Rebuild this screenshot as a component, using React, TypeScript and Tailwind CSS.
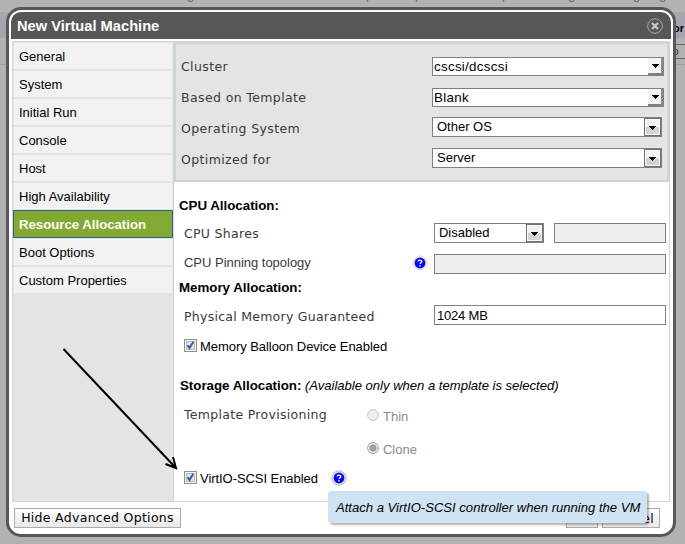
import type { ReactNode } from "react";

const tabs = [
  "General",
  "System",
  "Initial Run",
  "Console",
  "Host",
  "High Availability",
  "Resource Allocation",
  "Boot Options",
  "Custom Properties",
];

function Backdrop() {
  return (
    <div className="h-[544px] w-[685px] overflow-hidden text-[13px]">
      <div className="flex h-[13px] items-start overflow-hidden border-b border-[#a8a8a8]">
        <span className="-mt-[13px] ml-[187px] h-4 w-[7px] leading-4 text-[#666]">g</span>
        <span className="-mt-[13px] ml-[172px] h-4 w-[7px] leading-4 text-[#666]">p</span>
        <span className="-mt-[13px] ml-[42px] h-4 w-[7px] leading-4 text-[#666]">p</span>
        <span className="-mt-[13px] ml-[80px] h-4 w-[7px] leading-4 text-[#666]">p</span>
        <span className="-mt-[13px] ml-[59px] h-4 w-[7px] leading-4 text-[#666]">g</span>
        <span className="-mt-[13px] ml-[58px] h-4 w-[7px] leading-4 text-[#666]">g</span>
        <span className="-mt-[13px] ml-[19px] h-4 w-[7px] leading-4 text-[#666]">g</span>
      </div>
      <div className="flex h-[25px] items-center justify-end bg-[#a5a5b1] pt-[5px]">
        <span className="w-[12px] text-[11px] font-bold whitespace-nowrap">or</span>
      </div>
      <div className="flex h-[27px] justify-end border-b border-[#9f9f9f] pt-[6px]">
        <div className="flex h-[15px] w-[60px] items-center border-y border-[#666] pl-[48px] text-[10px] text-[#223]">
          o
        </div>
      </div>
    </div>
  );
}

function Label({ children, className = "tracking-[0.26px]" }: { children: ReactNode; className?: string }) {
  return (
    <span
      className={`font-['DejaVu_Sans',Verdana,sans-serif] text-[12.5px] whitespace-nowrap text-[#3a3a3a] ${className}`}
    >
      {children}
    </span>
  );
}

function Triangle() {
  return (
    <svg width="7" height="4" viewBox="0 0 7 4" shapeRendering="crispEdges">
      <path d="M0 0h7v1H6v1H5v1H4v1H3V3H2V2H1V1H0z" fill="#000" />
    </svg>
  );
}

function ComboBox({ value }: { value: string }) {
  return (
    <div className="flex h-[19px] w-[232px] items-stretch border border-[#808080] bg-white">
      <span className="flex-1 pl-px text-[13.33px] leading-[17px] tracking-[0.3px]">{value}</span>
      <span className="flex w-[15px] items-center justify-center border-r-2 border-b-2 border-[#808080] border-r-[#8c8c8c] bg-[#f3f3f3] pl-[2px]">
        <Triangle />
      </span>
    </div>
  );
}

function Select({ value, className }: { value: string; className: string }) {
  return (
    <div className={`flex h-[20px] items-stretch border border-[#808080] bg-white ${className}`}>
      <span className="flex-1 pl-[4px] text-[13px] leading-[18px]">{value}</span>
      <span className="flex w-[17px] items-center justify-center border border-[#707070] bg-linear-to-b from-[#f2f2f2] from-50% to-[#d4d4d4] to-50% pt-px shadow-[inset_0_0_0_1px_#fafafa]">
        <Triangle />
      </span>
    </div>
  );
}

function Checkbox() {
  return (
    <svg width="13" height="13" viewBox="0 0 13 13">
      <rect x=".5" y=".5" width="12" height="12" fill="#f4f4f4" stroke="#8e8f8f" />
      <rect x="2.5" y="2.5" width="8" height="8" fill="#dfe3e8" stroke="#b9bdc4" />
      <path d="M3.6 6.2 5.5 9 9.3 2.8" fill="none" stroke="#3f5494" strokeWidth="1.9" />
    </svg>
  );
}

function Radio({ checked = false }: { checked?: boolean }) {
  return (
    <svg width="12" height="12" viewBox="0 0 12 12">
      <circle cx="6" cy="6" r="5.4" fill="#f0f0f0" stroke={checked ? "#9c9c9c" : "#c4c4c4"} />
      {checked && <circle cx="6" cy="6" r="3.1" fill="#a8a8a8" stroke="#858585" />}
    </svg>
  );
}

function Help({ focused = false }: { focused?: boolean }) {
  return (
    <svg width="16" height="16" viewBox="0 0 16 16">
      <circle cx="8" cy="8" r="7.2" fill="#e6e6f2" stroke={focused ? "#b4b4b4" : "#e2e2e2"} />
      <circle cx="8" cy="8" r="5.4" fill="#0606ee" />
      <path
        d="M6.2 6.5C6.2 4.5 9.8 4.6 9.8 6.5 9.8 7.700 8 7.700 8 9.100M8 10.100v1.300"
        fill="none"
        stroke="#fff"
        strokeWidth="1.3"
      />
    </svg>
  );
}

function TopRow({ label, children }: { label: string; children: ReactNode }) {
  return (
    <div className="flex h-[31px] items-center">
      <Label className="w-[251px] pt-[2px] tracking-[0.38px]">{label}</Label>
      {children}
    </div>
  );
}

export default function App() {
  return (
    <div className="relative h-[544px] w-[685px] overflow-hidden bg-[#b2b2b2] font-['Liberation_Sans',Arial,sans-serif] text-black">
      <Backdrop />

      <div className="absolute top-[7px] left-[6px] flex h-[530px] w-[670px] flex-col rounded-[15px] border-[3px] border-[#575757] bg-white p-[2px]">
        <div className="flex h-[27px] shrink-0 items-center justify-between rounded-t-[10px] bg-[#575757] pr-[8px] pl-[6px]">
          <h1 className="text-[14.67px] font-bold whitespace-nowrap text-white">New Virtual Machine</h1>
          <svg width="16" height="16" viewBox="0 0 16 16">
            <circle cx="8" cy="8" r="7.3" fill="none" stroke="#a9a9a9" />
            <path d="m5 5 6 6M11 5l-6 6" stroke="#c6c6c6" strokeWidth="2.4" />
          </svg>
        </div>

        <div className="mt-[2px] ml-px flex h-[461px] w-[658px] shrink-0 border border-[#cdd8dd]">
          <nav className="flex w-[161px] shrink-0 flex-col border-r border-[#cdd8dd] bg-[#e4e4e4]">
            {tabs.map((tab) =>
              tab === "Resource Allocation" ? (
                <div
                  key={tab}
                  className="flex h-[28px] shrink-0 items-center border border-[#35608f] bg-[#83a935] pt-[2px] pl-[5px] text-[13.2px] font-bold text-[#fdfdf0]"
                >
                  {tab}
                </div>
              ) : (
                <div
                  key={tab}
                  className="flex h-[28px] shrink-0 items-center border border-[#e4e4e4] bg-[#f2f2f2] pt-[2px] pl-[5px] text-[13px]"
                >
                  {tab}
                </div>
              ),
            )}
          </nav>

          <main className="flex min-w-0 flex-1 flex-col">
            <section className="flex h-[140px] shrink-0 flex-col border-2 border-[#d0d3d4] bg-[#e4e4e4] pt-[7px] pl-[5px]">
              <TopRow label="Cluster">
                <ComboBox value="cscsi/dcscsi" />
              </TopRow>
              <TopRow label="Based on Template">
                <ComboBox value="Blank" />
              </TopRow>
              <TopRow label="Operating System">
                <Select value="Other OS" className="mb-[3px] w-[230px]" />
              </TopRow>
              <TopRow label="Optimized for">
                <Select value="Server" className="mb-[3px] w-[230px]" />
              </TopRow>
            </section>

            <section className="flex flex-col pl-[5px] text-[13px] tracking-[-0.02px]">
              <h2 className="mt-[15px] h-[18px] text-[13.33px] leading-[18px] font-bold">CPU Allocation:</h2>
              <div className="mt-[8px] flex h-[20px] items-center pl-[5px]">
                <Label className="w-[250px] pt-[3px] tracking-[0.3px]">CPU Shares</Label>
                <Select value="Disabled" className="w-[110px]" />
                <div className="ml-[10px] h-[20px] w-[112px] border border-[#808080] bg-[#efefef]" />
              </div>
              <div className="mt-[11px] flex h-[20px] items-center pl-[5px]">
                <span className="w-[228px] pb-[2px] whitespace-nowrap text-[#3a3a3a]">CPU Pinning topology</span>
                <span className="pb-[2px]">
                  <Help />
                </span>
                <div className="ml-[6px] h-[20px] w-[232px] border border-[#808080] bg-[#efefef]" />
              </div>
              <h2 className="mt-[5px] h-[18px] text-[13.33px] leading-[18px] font-bold">Memory Allocation:</h2>
              <div className="mt-[8px] flex h-[20px] items-center pl-[5px]">
                <Label className="w-[250px] pt-[4px] tracking-[0.26px]">Physical Memory Guaranteed</Label>
                <div className="h-[20px] w-[232px] border border-[#808080] bg-white pl-[2px] leading-[19px] tracking-[-0.2px]">
                  1024 MB
                </div>
              </div>
              <div className="mt-[10px] flex h-[20px] items-center gap-[3px] pl-[5px]">
                <Checkbox />
                <span className="pt-[4px] tracking-[-0.05px]">Memory Balloon Device Enabled</span>
              </div>
              <h2 className="mt-[22px] h-[18px] pl-px leading-[18px] whitespace-nowrap">
                <b className="text-[13.33px]">Storage Allocation:</b>{" "}
                <i className="text-[13.1px]">(Available only when a template is selected)</i>
              </h2>
              <div className="mt-[10px] flex h-[20px] items-center pl-[5px] text-[#8a8a8a]">
                <Label className="w-[183px] tracking-[0.3px]">Template Provisioning</Label>
                <Radio />
                <span className="ml-[4px] pt-[3px]">Thin</span>
              </div>
              <div className="mt-[13px] flex h-[20px] items-center gap-[4px] pl-[188px] text-[#8a8a8a]">
                <Radio checked />
                <span className="pt-[3px]">Clone</span>
              </div>
              <div className="mt-[9px] flex h-[20px] items-center gap-[3px] pl-[5px]">
                <Checkbox />
                <span className="w-[128px] pt-[4px] tracking-[-0.06px] whitespace-nowrap">VirtIO-SCSI Enabled</span>
                <span className="pt-px">
                  <Help focused />
                </span>
              </div>
            </section>
          </main>
        </div>

        <footer className="mt-[6px] flex h-[20px] items-stretch pr-[11px] pl-[3px] font-['DejaVu_Sans',Verdana,sans-serif] text-[12.5px] leading-[17px] tracking-[0.3px]">
          <button className="w-[167px] border border-[#aaa] bg-linear-to-b from-white to-[#e8e8e8] pb-px whitespace-nowrap">
            Hide Advanced Options
          </button>
          <button className="ml-auto w-[32px] border border-[#aaa] bg-linear-to-b from-white to-[#e8e8e8]">OK</button>
          <button className="ml-[4px] w-[58px] border border-[#aaa] bg-linear-to-b from-white to-[#e8e8e8] pl-[2px]">
            Cancel
          </button>
        </footer>
      </div>

      <svg className="absolute top-[340px] left-[55px]" width="130" height="140" viewBox="0 0 130 140">
        <path d="M8.5 9 120 127M110.500 124l10.500 4-3-11" fill="none" stroke="#000" strokeWidth="2" />
      </svg>

      <div className="absolute top-[491px] left-[328px] h-[32px] w-[319px] rounded-[3px] bg-[#d0e3f4] pl-[8px] text-[13.08px] leading-[33px] whitespace-nowrap italic shadow-[2px_2px_2px_rgba(0,0,0,0.3)]">
        Attach a VirtIO-SCSI controller when running the VM
      </div>
    </div>
  );
}
